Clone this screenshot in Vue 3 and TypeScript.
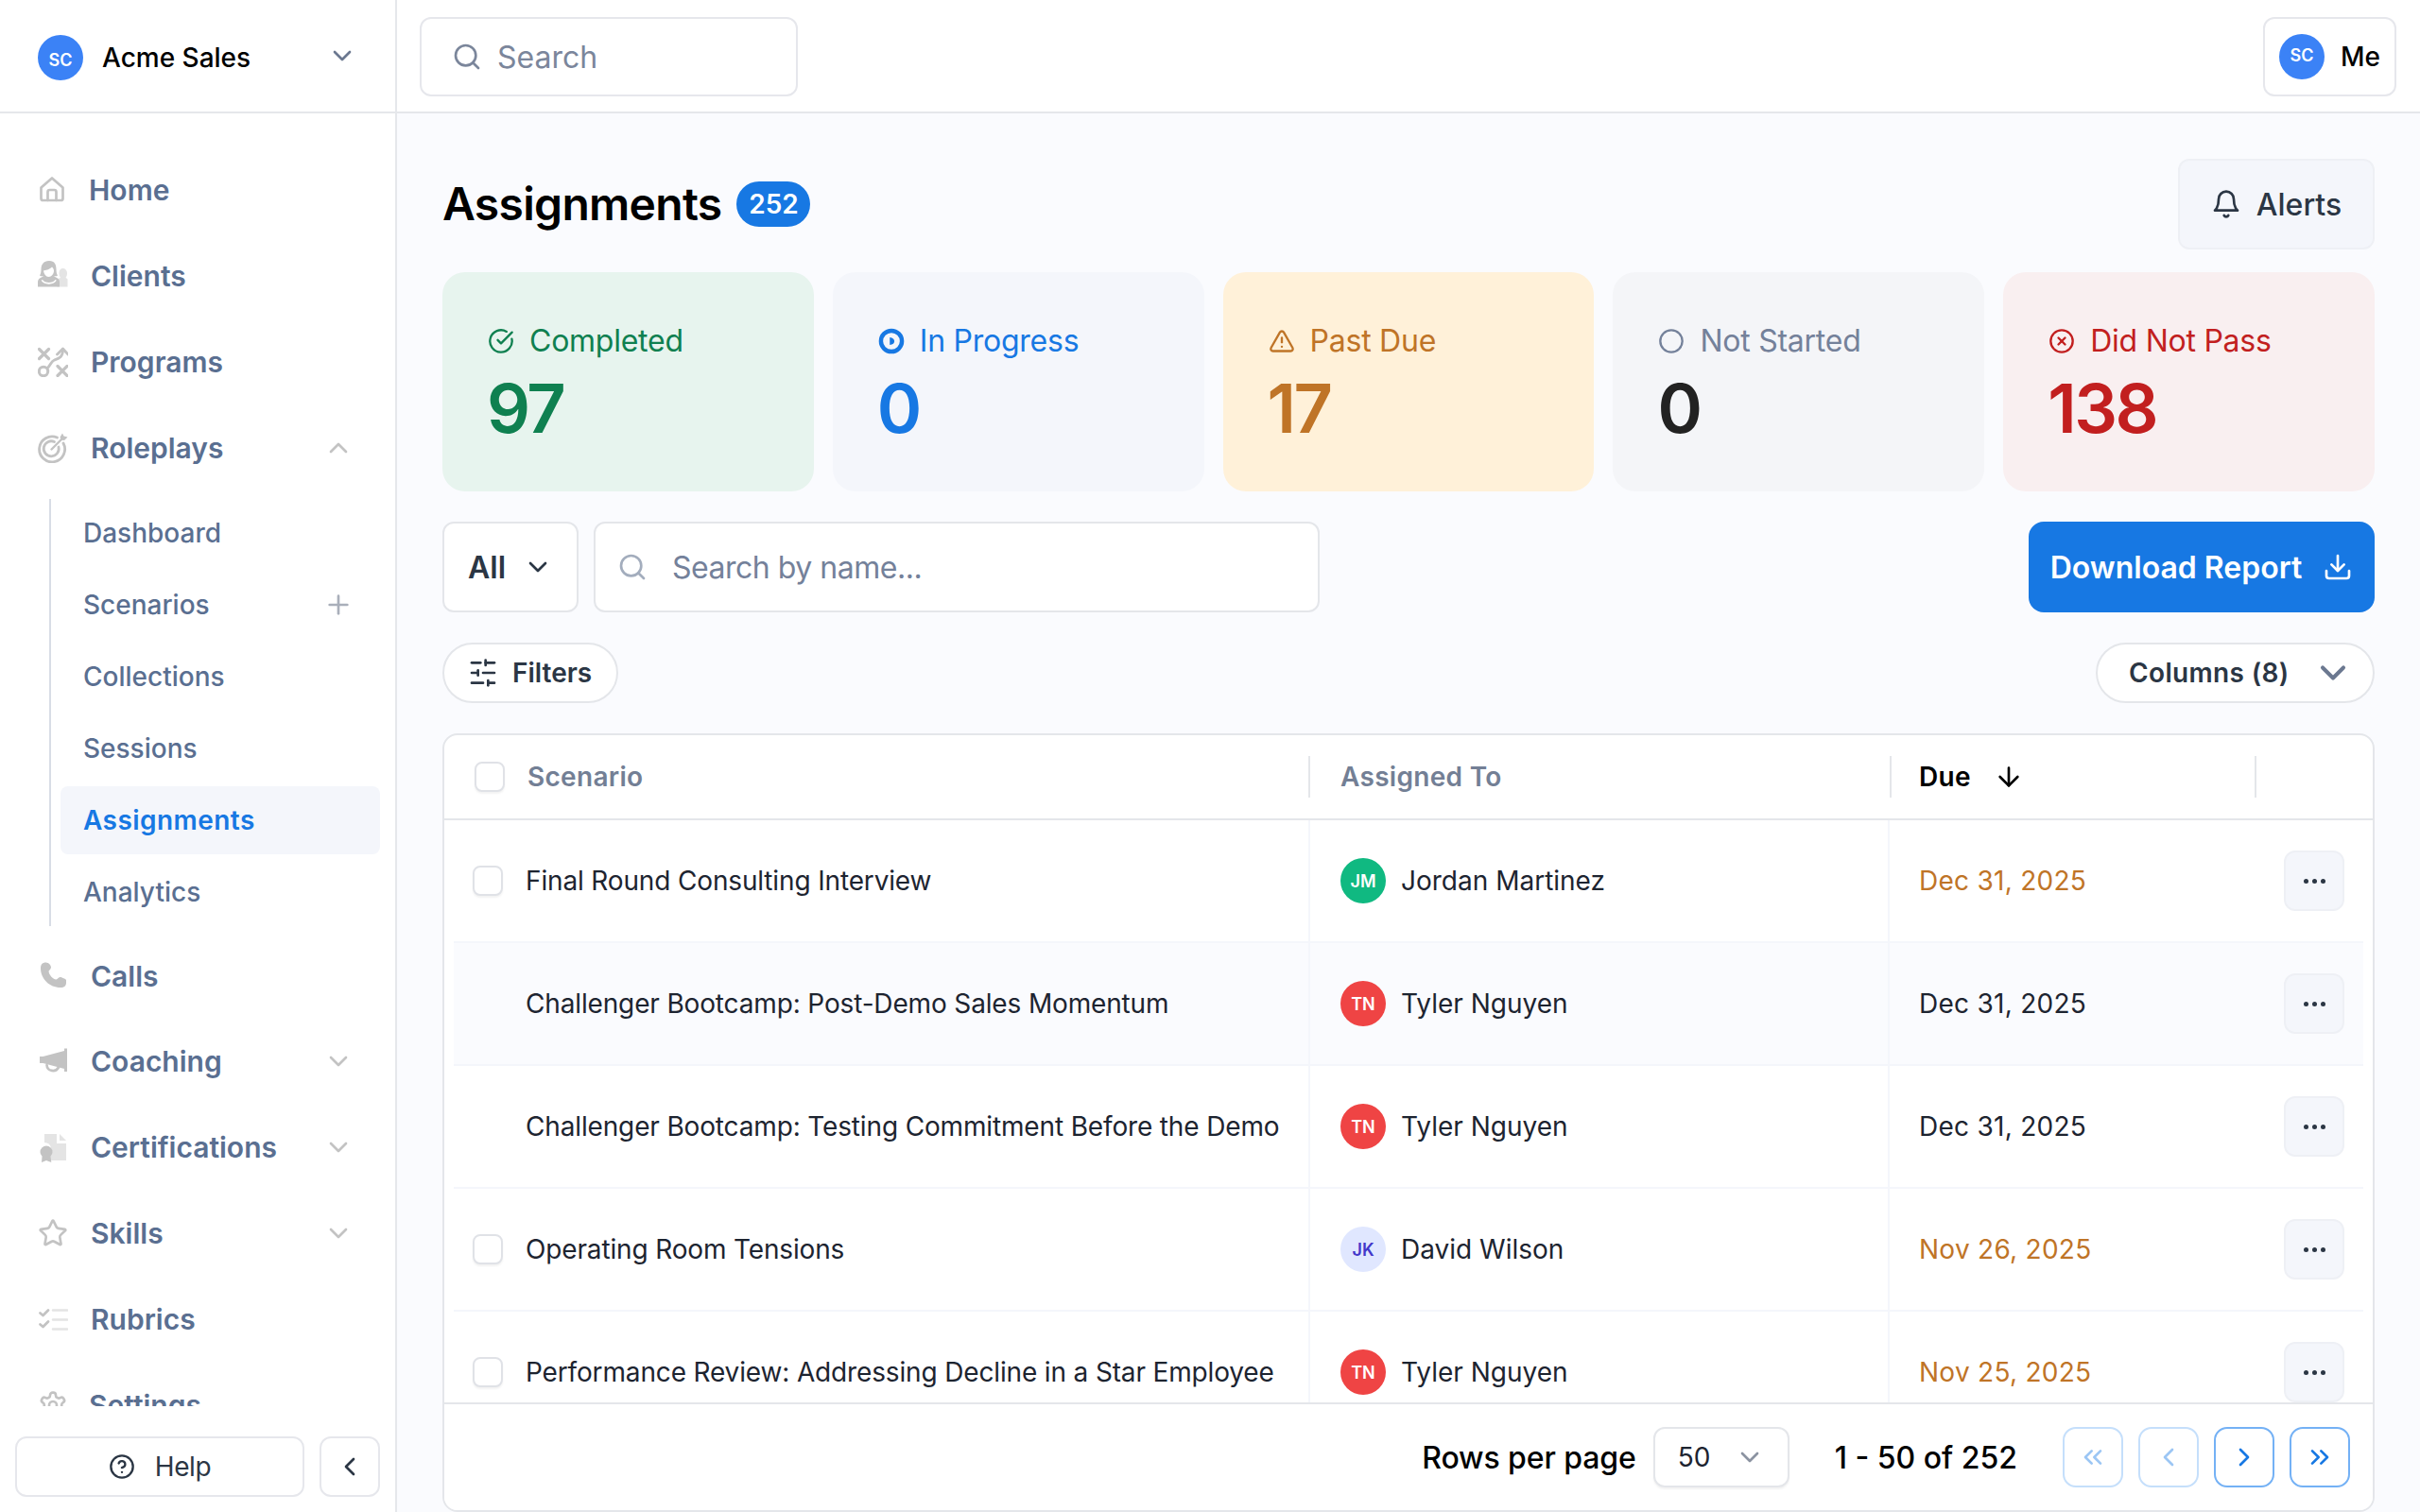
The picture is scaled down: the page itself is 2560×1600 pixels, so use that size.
<script setup lang="ts">
import { h } from 'vue'

type Shape = { d: string; fill?: string; stroke?: string; sw?: number }

const c = (cx: number, cy: number, r: number) =>
  `M${cx - r} ${cy}a${r} ${r} 0 1 0 ${2 * r} 0a${r} ${r} 0 1 0 ${-2 * r} 0Z`

const lucide: Record<string, string[]> = {
  chevDown: ['M6 9l6 6 6-6'],
  chevUp: ['M18 15l-6-6-6 6'],
  chevLeft: ['M15 18l-6-6 6-6'],
  chevRight: ['M9 18l6-6-6-6'],
  chevsLeft: ['M11 17l-5-5 5-5', 'M18 17l-5-5 5-5'],
  chevsRight: ['M6 17l5-5-5-5', 'M13 17l5-5-5-5'],
  search: [c(11, 11, 8), 'M21 21l-4.35-4.35'],
  plus: ['M5 12h14', 'M12 5v14'],
  bell: ['M6 8a6 6 0 0 1 12 0c0 7 3 9 3 9H3s3-2 3-9', 'M10.3 21a1.94 1.94 0 0 0 3.4 0'],
  download: ['M21 15v4a2 2 0 0 1-2 2H5a2 2 0 0 1-2-2v-4', 'M7 10l5 5 5-5', 'M12 15V3'],
  sliders: ['M21 4h-7', 'M10 4H3', 'M21 12h-9', 'M8 12H3', 'M21 20h-5', 'M12 20H3', 'M14 2v4', 'M8 10v4', 'M16 18v4'],
  arrowDown: ['M12 5v14', 'M19 12l-7 7-7-7'],
  help: [c(12, 12, 10), 'M9.09 9a3 3 0 0 1 5.83 1c0 2-3 3-3 3', 'M12 17h.01'],
  done: ['M21.8 10A10 10 0 1 1 17 3.34', 'M9 11l3 3L22 4'],
  alert: ['M21.73 18l-8-14a2 2 0 0 0-3.48 0l-8 14A2 2 0 0 0 4 21h16a2 2 0 0 0 1.73-3', 'M12 9v4', 'M12 17h.01'],
  circle: [c(12, 12, 10)],
  xcircle: [c(12, 12, 10), 'M15 9l-6 6', 'M9 9l6 6']
}

const Lu = (p: { name: string; sw?: number }) =>
  h(
    'svg',
    {
      viewBox: '0 0 24 24',
      fill: 'none',
      stroke: 'currentColor',
      'stroke-width': p.sw ?? 2,
      'stroke-linecap': 'round',
      'stroke-linejoin': 'round'
    },
    lucide[p.name].map((d) => h('path', { d }))
  )
Lu.props = ['name', 'sw']

const G = '#c3c3c3'
const L = '#e4e4e4'
const line = (d: string, stroke = G, sw = 2.7): Shape => ({ d, stroke, sw })
const solid = (d: string, fill = G): Shape => ({ d, fill })

const navIcons: Record<string, Shape[]> = {
  home: [
    line('M3.5 13.5L15 3.5l11.5 10V25a2 2 0 0 1-2 2h-19a2 2 0 0 1-2-2Z'),
    line('M10.5 27V18a2 2 0 0 1 2-2h5a2 2 0 0 1 2 2v9')
  ],
  clients: [
    solid('M20 27.5v-5c0-2.5 1-3.5 4-4.5-1-1.5-1.5-3-1.5-5 0-3 1.5-5 4-5s4.500 2 4.500 5c0 2-.5 3.500-1.500 5 1 .5 2 1 2 2v7.500Z', L),
    solid('M12 0C6 0 3.500 4 3.500 9c0 3-.5 5-1.500 6.500 1.500 1 3 1 4.500.5L2 18.500C.5 19.500 0 21 0 23v4.500h23V23c0-2-.5-3.500-2-4.500l-4.500-2.500c1.500.5 3 .5 4.500-.5-1-1.500-1.500-3.500-1.500-6.500C19.500 4 18 0 12 0Z'),
    solid('M6 10.500c2-.5 6-1 9-4 1 1 2 2 2 4 0 3.500-2.500 6.500-5.500 6.500S6.500 14 6 10.500ZM5 20c2 4 11.500 4 13.500 0l1.200.6c-2 5.500-14 5.500-16 0Z', '#fff')
  ],
  programs: [
    line('M1.500 2.500l10 10M11.500 2.500l-10 10', G, 3.2),
    line(c(6, 26, 4.700), G, 3),
    line('M21 20.500l10 10M31 20.500l-10 10', G, 3.2),
    line('M10 22.500c4-3 3.500-7 7.500-8.500 5-1.800 9-3 9-11', G, 2.800),
    line('M20.500 8l6-6 5.500 6', G, 2.800)
  ],
  target: [
    line('M27 11a13.500 13.500 0 1 1-6.500-6', G, 2.800),
    line('M22 15a8 8 0 1 1-4.500-5.500', G, 2.800),
    line('M14.500 17.500L27 5', G, 2.400),
    solid('M23.500 4.500L26 .5l1.500 3 4 1-3.500 3.500-3.500-.5Z')
  ],
  phone: [
    solid('M8.500 1.500C5 1.500 3 3.500 3 7.500 3 19 12.500 28 24 28c4 0 6-2 6-5v-3c-.5-1-5-3-6.500-3-2 0-2.500 2.500-4 2.500C15.500 19 12 14.500 11.500 11c0-1.500 2.500-2 2.500-4.500 0-2-2.500-5-5.500-5Z')
  ],
  coach: [
    solid('M2 11h3.500L28 5V2.500h3V27h-3v-3L5.500 18H2Z'),
    line('M9.500 20c.5 7 9.500 8 12.500 2.500', G, 2.700)
  ],
  cert: [
    solid('M7 2h13v10h10v18H11v-6c5-3 4-13-4-13Z', L),
    solid('M23 2l7 7h-7Z', L),
    solid(c(9, 21, 6.500)),
    solid('M4.500 26h9l.8 6-5.300-2-5 2Z')
  ],
  rubric: [
    line('M2.500 9.500l3 2.500 5.500-5.500', G, 2.800),
    line('M2.500 21.500l3 2.500 5.500-5.500', G, 2.800),
    line('M16 6.500h15M16 16.500h15M16 26.500h15', L, 2.600)
  ]
}

const Nav = (p: { name: string }) =>
  h(
    'svg',
    { viewBox: '0 0 32 32', fill: 'none', 'stroke-linecap': 'round', 'stroke-linejoin': 'round' },
    navIcons[p.name].map((s) =>
      h('path', { d: s.d, fill: s.fill ?? 'none', stroke: s.stroke ?? 'none', 'stroke-width': s.sw ?? 0 })
    )
  )
Nav.props = ['name']

const SKILL =
  'M11.525 2.295a.53.53 0 0 1 .95 0l2.31 4.679a2.123 2.123 0 0 0 1.595 1.16l5.166.756a.53.53 0 0 1 .294.904l-3.736 3.638a2.123 2.123 0 0 0-.611 1.878l.882 5.14a.53.53 0 0 1-.771.56l-4.618-2.428a2.122 2.122 0 0 0-1.973 0L6.396 21.01a.53.53 0 0 1-.77-.56l.881-5.139a2.122 2.122 0 0 0-.611-1.879L2.16 9.795a.53.53 0 0 1 .294-.906l5.165-.755a2.122 2.122 0 0 0 1.597-1.16z'
const GEAR =
  'M12.22 2h-.44a2 2 0 0 0-2 2v.18a2 2 0 0 1-1 1.73l-.43.25a2 2 0 0 1-2 0l-.15-.08a2 2 0 0 0-2.73.73l-.22.38a2 2 0 0 0 .73 2.73l.15.1a2 2 0 0 1 1 1.72v.51a2 2 0 0 1-1 1.74l-.15.09a2 2 0 0 0-.73 2.73l.22.38a2 2 0 0 0 2.73.73l.15-.08a2 2 0 0 1 2 0l.43.25a2 2 0 0 1 1 1.73V20a2 2 0 0 0 2 2h.44a2 2 0 0 0 2-2v-.18a2 2 0 0 1 1-1.73l.43-.25a2 2 0 0 1 2 0l.15.08a2 2 0 0 0 2.73-.73l.22-.39a2 2 0 0 0-.73-2.73l-.15-.08a2 2 0 0 1-1-1.74v-.5a2 2 0 0 1 1-1.74l.15-.09a2 2 0 0 0 .73-2.73l-.22-.38a2 2 0 0 0-2.73-.73l-.15.08a2 2 0 0 1-2 0l-.43-.25a2 2 0 0 1-1-1.73V4a2 2 0 0 0-2-2z'
lucide.star = [SKILL]
lucide.gear = [GEAR, c(12, 12, 3)]

const navTop = [
  { label: 'Home', icon: 'home' },
  { label: 'Clients', icon: 'clients' },
  { label: 'Programs', icon: 'programs' },
  { label: 'Roleplays', icon: 'target', chev: 'chevUp' }
]
const subItems = [
  { label: 'Dashboard' },
  { label: 'Scenarios', plus: true },
  { label: 'Collections' },
  { label: 'Sessions' },
  { label: 'Assignments', active: true },
  { label: 'Analytics' }
]
const navBottom = [
  { label: 'Calls', icon: 'phone' },
  { label: 'Coaching', icon: 'coach', chev: 'chevDown' },
  { label: 'Certifications', icon: 'cert', chev: 'chevDown' },
  { label: 'Skills', lu: 'star', chev: 'chevDown' },
  { label: 'Rubrics', icon: 'rubric' },
  { label: 'Settings', lu: 'gear' }
]

const cards = [
  { label: 'Completed', value: '97', icon: 'done', cls: 'green' },
  { label: 'In Progress', value: '0', icon: 'progress', cls: 'blue' },
  { label: 'Past Due', value: '17', icon: 'alert', cls: 'amber' },
  { label: 'Not Started', value: '0', icon: 'circle', cls: 'gray' },
  { label: 'Did Not Pass', value: '138', icon: 'xcircle', cls: 'red' }
]

const rows = [
  { title: 'Final Round Consulting Interview', who: 'Jordan Martinez', init: 'JM', av: 'av-green', due: 'Dec 31, 2025', late: true, check: true },
  { title: 'Challenger Bootcamp: Post-Demo Sales Momentum', who: 'Tyler Nguyen', init: 'TN', av: 'av-red', due: 'Dec 31, 2025', late: false, check: false, tint: true },
  { title: 'Challenger Bootcamp: Testing Commitment Before the Demo', who: 'Tyler Nguyen', init: 'TN', av: 'av-red', due: 'Dec 31, 2025', late: false, check: false },
  { title: 'Operating Room Tensions', who: 'David Wilson', init: 'JK', av: 'av-violet', due: 'Nov 26, 2025', late: true, check: true },
  { title: 'Performance Review: Addressing Decline in a Star Employee', who: 'Tyler Nguyen', init: 'TN', av: 'av-red', due: 'Nov 25, 2025', late: true, check: true }
]

const pager = [
  { icon: 'chevsLeft', off: true },
  { icon: 'chevLeft', off: true },
  { icon: 'chevRight', off: false },
  { icon: 'chevsRight', off: false }
]
</script>

<template>
  <div class="app">
    <aside class="side">
      <div class="brand">
        <span class="avatar av-blue">SC</span>
        <span class="brand-name">Acme Sales</span>
        <Lu name="chevDown" class="brand-chev" />
      </div>

      <nav class="nav">
        <a v-for="item in navTop" :key="item.label" class="nav-item">
          <Nav :name="item.icon" class="nav-ic" />
          <span class="nav-label" :class="{ 'home-label': item.label === 'Home' }">{{ item.label }}</span>
          <Lu v-if="item.chev" :name="item.chev" class="nav-chev" />
        </a>
        <ul class="sub">
          <li v-for="s in subItems" :key="s.label" class="sub-item" :class="{ active: s.active }">
            <span>{{ s.label }}</span>
            <Lu v-if="s.plus" name="plus" class="sub-plus" />
          </li>
        </ul>
        <a v-for="item in navBottom" :key="item.label" class="nav-item">
          <Nav v-if="item.icon" :name="item.icon" class="nav-ic" />
          <Lu v-else :name="item.lu as string" class="nav-ic nav-lu" />
          <span class="nav-label" :class="{ 'home-label': item.label === 'Settings' }">{{ item.label }}</span>
          <Lu v-if="item.chev" :name="item.chev" class="nav-chev" />
        </a>
      </nav>

      <div class="side-foot">
        <button class="help"><Lu name="help" class="help-ic" /><span class="help-text">Help</span></button>
        <button class="collapse"><Lu name="chevLeft" class="i32" /></button>
      </div>
    </aside>

    <div class="main">
      <header class="top">
        <div class="top-search">
          <Lu name="search" class="i32" />
          <span>Search</span>
        </div>
        <button class="me">
          <span class="avatar av-blue me-av">SC</span>
          <span>Me</span>
        </button>
      </header>

      <main class="content">
        <div class="title-row">
          <h1 class="title">Assignments</h1>
          <span class="count">252</span>
          <button class="alerts"><Lu name="bell" class="i32" />Alerts</button>
        </div>

        <section class="cards">
          <div v-for="card in cards" :key="card.label" class="card" :class="card.cls">
            <div class="card-label">
              <svg v-if="card.icon === 'progress'" class="card-ic" viewBox="0 0 24 24" fill="none">
                <circle cx="12" cy="12" r="9.500" stroke="currentColor" stroke-width="3.800" />
                <path d="M10.500 8.500c2.800.3 4.200 1.800 4.200 3.500s-1.400 3.200-4.200 3.500Z" fill="currentColor" />
              </svg>
              <Lu v-else :name="card.icon" class="card-ic" />
              <span>{{ card.label }}</span>
            </div>
            <div class="card-value">{{ card.value }}</div>
          </div>
        </section>

        <div class="toolbar">
          <button class="all">All<Lu name="chevDown" class="i32" /></button>
          <div class="name-search">
            <Lu name="search" class="i32" />
            <span>Search by name...</span>
          </div>
          <button class="download">Download Report<Lu name="download" class="i32" /></button>
        </div>

        <div class="toolbar2">
          <button class="pill filters"><Lu name="sliders" class="i32" />Filters</button>
          <button class="pill columns">Columns (8)<Lu name="chevDown" class="cols-chev" :sw="2.200" /></button>
        </div>

        <section class="table">
          <div class="thead">
            <div class="th th-1"><span class="box head-box"></span>Scenario</div>
            <div class="th th-2">Assigned To</div>
            <div class="th th-3">Due<Lu name="arrowDown" class="i32" /></div>
          </div>
          <div class="tbody">
            <div v-for="(r, i) in rows" :key="i" class="tr" :class="{ tint: r.tint }">
              <div class="td td-1">
                <span class="box" :class="{ hidden: !r.check }"></span>
                <span>{{ r.title }}</span>
              </div>
              <div class="td td-2">
                <span class="avatar" :class="r.av">{{ r.init }}</span>
                <span>{{ r.who }}</span>
              </div>
              <div class="td td-3">
                <span class="date" :class="{ late: r.late }">{{ r.due }}</span>
                <button class="more"><i></i><i></i><i></i></button>
              </div>
            </div>
          </div>
          <footer class="tfoot">
            <span class="foot-text rows-label">Rows per page</span>
            <div class="per-page"><span>50</span><Lu name="chevDown" class="i32" /></div>
            <span class="foot-text range">1 - 50 of 252</span>
            <div class="pager">
              <button v-for="p in pager" :key="p.icon" class="page-btn" :class="{ off: p.off }">
                <Lu :name="p.icon" class="i32" />
              </button>
            </div>
          </footer>
        </section>
      </main>
    </div>
  </div>
</template>

<style>
html,
body {
  margin: 0;
  height: 100%;
  overflow: hidden;
}
</style>

<style scoped>
* {
  box-sizing: border-box;
}
button {
  font: inherit;
  cursor: pointer;
}
.app {
  display: flex;
  width: 2560px;
  height: 1600px;
  overflow: hidden;
  font-family: Inter, "Liberation Sans", sans-serif;
  color: #1d2430;
  background: #fff;
}
.i32 {
  width: 32px;
  height: 32px;
  flex: none;
}

/* sidebar */
.side {
  width: 420px;
  flex: none;
  display: flex;
  flex-direction: column;
  border-right: 2px solid #e5e7eb;
  background: #fff;
}
.brand {
  height: 120px;
  flex: none;
  display: flex;
  align-items: center;
  padding: 4px 40px 0 40px;
  border-bottom: 2px solid #e5e7eb;
}
.avatar {
  width: 48px;
  height: 48px;
  border-radius: 50%;
  flex: none;
  display: flex;
  align-items: center;
  justify-content: center;
  font-size: 18px;
  font-weight: 600;
  color: #fff;
}
.av-blue {
  background: #3b82f6;
}
.av-green {
  background: #10b981;
}
.av-red {
  background: #ef4444;
}
.av-violet {
  background: #e0e7ff;
  color: #4338ca;
}
.brand .avatar {
  padding-top: 4px;
}
.brand-name {
  margin-left: 20px;
  font-size: 28px;
  font-weight: 500;
  color: #000;
  flex: 1;
}
.brand-chev {
  width: 32px;
  height: 32px;
  color: #6b7890;
  margin-top: -4px;
}
.nav {
  flex: 1;
  min-height: 0;
  overflow: hidden;
  padding-top: 36px;
}
.nav-item {
  height: 90.800px;
  display: flex;
  align-items: center;
  padding: 0 44px 0 40px;
  color: #5a6f91;
}
.nav-ic {
  width: 32px;
  height: 32px;
  flex: none;
}
.nav-lu {
  color: #c3c3c3;
}
.nav-label {
  margin-left: 24px;
  flex: 1;
  font-size: 30px;
  font-weight: 600;
}
.home-label {
  margin-left: 22px;
}
.nav-chev {
  width: 32px;
  height: 32px;
  flex: none;
  color: #c3c3c3;
}
.sub {
  list-style: none;
  margin: 9px 0 7px 52px;
  padding: 0 16px 0 10px;
  border-left: 2px solid #d8dde6;
  display: flex;
  flex-direction: column;
  gap: 4px;
}
.sub-item {
  height: 72px;
  display: flex;
  align-items: center;
  justify-content: space-between;
  padding: 0 28px 0 24px;
  font-size: 28px;
  font-weight: 500;
  color: #5a6f91;
  border-radius: 8px;
}
.sub-item.active {
  background: #f4f6fb;
  color: #1778e3;
  font-weight: 600;
  letter-spacing: 0.45px;
}
.sub-plus {
  width: 32px;
  height: 32px;
  color: #a9afba;
}
.side-foot {
  height: 112px;
  flex: none;
  display: flex;
  gap: 16px;
  padding: 32px 16px 16px;
  background: #fff;
}
.help,
.collapse {
  height: 64px;
  display: flex;
  align-items: center;
  justify-content: center;
  background: #fff;
  border: 2px solid #e6e7ec;
  border-radius: 12px;
  color: #2b3644;
  font-size: 28px;
}
.help {
  width: 306px;
  gap: 21px;
}
.help-text {
  letter-spacing: -0.4px;
}
.help-ic {
  width: 28px;
  height: 28px;
}
.collapse {
  width: 64px;
  padding: 0;
}

/* main */
.main {
  flex: 1;
  min-width: 0;
  display: flex;
  flex-direction: column;
  background: #fafbfe;
}
.top {
  height: 120px;
  flex: none;
  display: flex;
  align-items: center;
  justify-content: space-between;
  padding: 2px 25px 0 24px;
  background: #fff;
  border-bottom: 2px solid #e5e7eb;
}
.top-search {
  width: 400px;
  height: 84px;
  display: flex;
  align-items: center;
  gap: 16px;
  padding-left: 32px;
  border: 2px solid #e6e7ec;
  border-radius: 12px;
  color: #7b869b;
  font-size: 32px;
}
.me {
  width: 141px;
  height: 84px;
  display: flex;
  align-items: center;
  gap: 17px;
  padding: 0 0 0 15px;
  background: #fff;
  border: 2px solid #e6e7ec;
  border-radius: 12px;
  font-size: 28px;
  font-weight: 500;
  color: #000;
}
.me-av {
  padding-bottom: 4px;
}
.content {
  flex: 1;
  min-height: 0;
  display: flex;
  flex-direction: column;
  padding: 48px 48px 0;
}
.title-row {
  height: 96px;
  flex: none;
  display: flex;
  align-items: center;
}
.title {
  margin: 0 0 2px;
  font-size: 48px;
  font-weight: 600;
  letter-spacing: -0.7px;
  color: #000;
}
.count {
  margin-left: 16px;
  width: 78px;
  height: 48px;
  border-radius: 24px;
  background: #1778e3;
  color: #fff;
  font-size: 28px;
  font-weight: 600;
  display: flex;
  align-items: center;
  justify-content: center;
}
.alerts {
  margin-left: auto;
  width: 208px;
  height: 96px;
  display: flex;
  align-items: center;
  justify-content: center;
  gap: 16px;
  background: #f4f6fb;
  border: 2px solid #eef0f5;
  border-radius: 12px;
  font-size: 32px;
  font-weight: 500;
  color: #2b3644;
}
.cards {
  margin-top: 24px;
  height: 232px;
  flex: none;
  display: grid;
  grid-template-columns: repeat(5, 1fr);
  gap: 20px;
}
.card {
  border-radius: 24px;
  padding: 53px 48px 0;
}
.card-label {
  display: flex;
  align-items: center;
  gap: 16px;
  font-size: 32px;
  line-height: 40px;
  letter-spacing: -0.25px;
}
.card-ic {
  width: 28px;
  height: 28px;
  flex: none;
}
.card-value {
  margin-top: 8px;
  margin-left: -1px;
  font-size: 72px;
  line-height: 86px;
  font-weight: 600;
  letter-spacing: -2.5px;
}
.green {
  background: #e7f4ee;
  color: #0f8050;
}
.blue {
  background: #f4f6fb;
  color: #1778e3;
}
.amber {
  background: #fff1d9;
  color: #bf7427;
}
.gray {
  background: #f4f5f8;
  color: #74819a;
}
.gray .card-value {
  color: #222;
}
.red {
  background: #f9eff0;
  color: #c21f1f;
}
.toolbar {
  margin-top: 32px;
  height: 96px;
  flex: none;
  display: flex;
  gap: 16px;
}
.all {
  width: 144px;
  display: flex;
  align-items: center;
  justify-content: space-between;
  padding: 0 25px 0 25px;
  background: #fff;
  border: 2px solid #e4e6ea;
  border-radius: 12px;
  font-size: 32px;
  font-weight: 600;
  color: #2b3644;
}
.name-search {
  width: 768px;
  display: flex;
  align-items: center;
  gap: 26px;
  padding-left: 23px;
  background: #fff;
  border: 2px solid #e4e6ea;
  border-radius: 12px;
  font-size: 32px;
  letter-spacing: -0.48px;
  color: #74819a;
}
.name-search svg {
  color: #a3adbd;
}
.download {
  margin-left: auto;
  width: 366px;
  display: flex;
  align-items: center;
  justify-content: center;
  gap: 22px;
  background: #1778e3;
  border: 0;
  border-radius: 16px;
  color: #fff;
  font-size: 32px;
  font-weight: 600;
}
.toolbar2 {
  margin-top: 32px;
  height: 64px;
  flex: none;
  display: flex;
  justify-content: space-between;
}
.pill {
  height: 64px;
  display: flex;
  align-items: center;
  background: #fff;
  border: 2px solid #e4e6ea;
  border-radius: 32px;
  font-size: 28px;
  font-weight: 600;
  color: #2b3644;
}
.filters {
  width: 186px;
  gap: 15px;
  padding: 0 0 0 25px;
}
.columns {
  width: 295px;
  padding: 0 0 0 33px;
  gap: 24px;
  letter-spacing: 0.35px;
}
.cols-chev {
  width: 44px;
  height: 44px;
  flex: none;
  color: #6b7890;
}
.table {
  margin-top: 32px;
  flex: 1;
  min-height: 0;
  display: flex;
  flex-direction: column;
  background: #fff;
  border: 2px solid #e4e6ea;
  border-radius: 16px;
  overflow: hidden;
}
.thead {
  height: 90px;
  flex: none;
  display: grid;
  grid-template-columns: 916px 615px 386px 1fr;
  align-items: center;
  border-bottom: 2px solid #e4e6ea;
}
.th {
  height: 44px;
  display: flex;
  align-items: center;
  border-right: 2px solid #e4e6ea;
  font-size: 28px;
  font-weight: 600;
  letter-spacing: 0.3px;
  color: #737f95;
}
.th-1 {
  padding-left: 32px;
  gap: 24px;
}
.th-2 {
  padding-left: 32px;
}
.th-3 {
  padding-left: 29px;
  gap: 24px;
  color: #000;
}
.box {
  width: 32px;
  height: 32px;
  flex: none;
  background: #fff;
  border: 2px solid #e0e2e7;
  border-radius: 8px;
  box-shadow: 0 2px 2px rgba(0, 0, 0, 0.05);
}
.box.hidden {
  visibility: hidden;
}
.tbody {
  flex: 1;
  min-height: 0;
  overflow: hidden;
  padding: 0 10px;
}
.tr {
  height: 130px;
  display: grid;
  grid-template-columns: 906px 613px 1fr;
  border-bottom: 2px solid #f4f6fb;
  font-size: 28px;
  color: #1d2430;
}
.tr.tint {
  background: #fafbfe;
}
.td {
  display: flex;
  align-items: center;
}
.td-1 {
  padding-left: 20px;
  gap: 24px;
  border-right: 2px solid #f4f6fb;
  letter-spacing: -0.15px;
}
.td-2 {
  padding-left: 32px;
  gap: 16px;
  border-right: 2px solid #f4f6fb;
}
.td-3 {
  padding: 0 20px 0 31px;
  justify-content: space-between;
}
.date {
  letter-spacing: 0.27px;
}
.late {
  color: #bf7427;
}
.more {
  width: 64px;
  height: 64px;
  display: flex;
  align-items: center;
  justify-content: center;
  gap: 4px;
  padding: 0;
  background: #f4f6fb;
  border: 2px solid #eef0f5;
  border-radius: 12px;
}
.more i {
  width: 5px;
  height: 5px;
  border-radius: 50%;
  background: #2b3644;
}
.tfoot {
  height: 114px;
  flex: none;
  display: flex;
  align-items: center;
  justify-content: flex-end;
  padding: 0 24px 0 0;
  background: #fff;
  border-top: 2px solid #e4e6ea;
}
.foot-text {
  font-size: 32px;
  font-weight: 500;
  color: #000;
}
.rows-label {
  letter-spacing: -0.1px;
}
.range {
  margin: 0 48px;
}
.per-page {
  margin-left: 18px;
  width: 144px;
  height: 64px;
  display: flex;
  align-items: center;
  justify-content: space-between;
  padding: 0 24px;
  background: #fff;
  border: 2px solid #e4e6ea;
  border-radius: 12px;
  box-shadow: 0 2px 2px rgba(0, 0, 0, 0.05);
  font-size: 28px;
}
.per-page svg {
  color: #8b93a1;
}
.pager {
  display: flex;
  gap: 16px;
}
.page-btn {
  width: 64px;
  height: 64px;
  padding: 0;
  display: flex;
  align-items: center;
  justify-content: center;
  background: #fff;
  border: 2px solid #74b1f5;
  border-radius: 14px;
  color: #1778e3;
}
.page-btn.off {
  border-color: #c5dffb;
  color: #9cc6f4;
}
</style>
